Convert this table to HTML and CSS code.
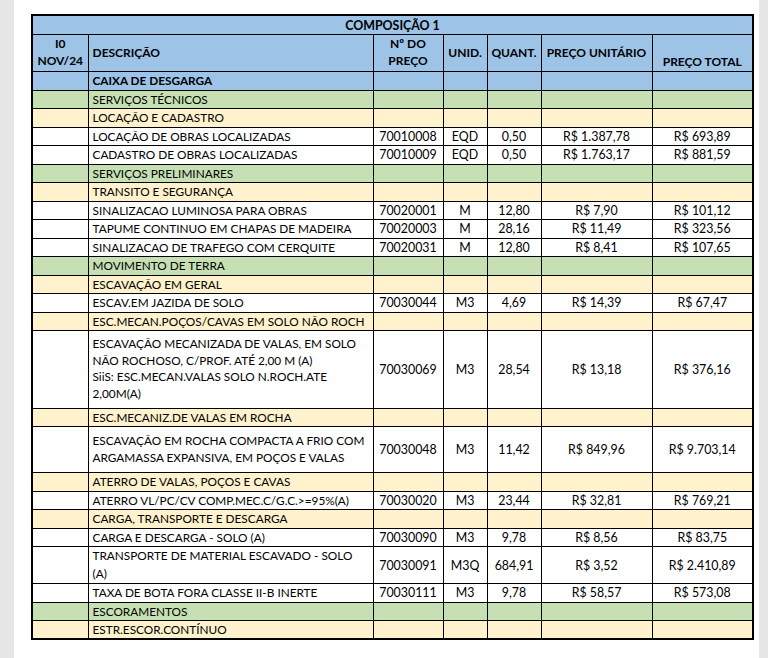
FILE: index.html
```html
<!DOCTYPE html>
<html lang="pt-BR">
<head>
<meta charset="utf-8">
<title>Composição 1</title>
<link rel="stylesheet" href="styles.css">
</head>
<body>
<div class="page">
  <table class="sheet">
    <colgroup>
      <col class="c-id"><col class="c-desc"><col class="c-code"><col class="c-unit"><col class="c-qty"><col class="c-unitp"><col class="c-total">
    </colgroup>
    <thead>
      <tr class="r-title blue"><th colspan="7">COMPOSIÇÃO 1</th></tr>
      <tr class="r-head blue">
        <th>I0<br>NOV/24</th>
        <th class="left">DESCRIÇÃO</th>
        <th>Nº DO<br>PREÇO</th>
        <th>UNID.</th>
        <th>QUANT.</th>
        <th>PREÇO UNITÁRIO</th>
        <th class="bottom">PREÇO TOTAL</th>
      </tr>
    </thead>
    <tbody>
      <tr class="blue"><td></td><td class="desc bold">CAIXA DE DESGARGA</td><td></td><td></td><td></td><td></td><td></td></tr>
      <tr class="green"><td></td><td class="desc">SERVIÇOS TÉCNICOS</td><td></td><td></td><td></td><td></td><td></td></tr>
      <tr class="beige"><td></td><td class="desc">LOCAÇÃO E CADASTRO</td><td></td><td></td><td></td><td></td><td></td></tr>
      <tr><td></td><td class="desc">LOCAÇÃO DE OBRAS LOCALIZADAS</td><td>70010008</td><td>EQD</td><td>0,50</td><td>R$ 1.387,78</td><td>R$ 693,89</td></tr>
      <tr><td></td><td class="desc">CADASTRO DE OBRAS LOCALIZADAS</td><td>70010009</td><td>EQD</td><td>0,50</td><td>R$ 1.763,17</td><td>R$ 881,59</td></tr>
      <tr class="green"><td></td><td class="desc">SERVIÇOS PRELIMINARES</td><td></td><td></td><td></td><td></td><td></td></tr>
      <tr class="beige"><td></td><td class="desc">TRANSITO E SEGURANÇA</td><td></td><td></td><td></td><td></td><td></td></tr>
      <tr><td></td><td class="desc">SINALIZACAO LUMINOSA PARA OBRAS</td><td>70020001</td><td>M</td><td>12,80</td><td>R$ 7,90</td><td>R$ 101,12</td></tr>
      <tr><td></td><td class="desc">TAPUME CONTINUO EM CHAPAS DE MADEIRA</td><td>70020003</td><td>M</td><td>28,16</td><td>R$ 11,49</td><td>R$ 323,56</td></tr>
      <tr><td></td><td class="desc">SINALIZACAO DE TRAFEGO COM CERQUITE</td><td>70020031</td><td>M</td><td>12,80</td><td>R$ 8,41</td><td>R$ 107,65</td></tr>
      <tr class="green"><td></td><td class="desc">MOVIMENTO DE TERRA</td><td></td><td></td><td></td><td></td><td></td></tr>
      <tr class="beige"><td></td><td class="desc">ESCAVAÇÃO EM GERAL</td><td></td><td></td><td></td><td></td><td></td></tr>
      <tr><td></td><td class="desc">ESCAV.EM JAZIDA DE SOLO</td><td>70030044</td><td>M3</td><td>4,69</td><td>R$ 14,39</td><td>R$ 67,47</td></tr>
      <tr class="beige"><td></td><td class="desc">ESC.MECAN.POÇOS/CAVAS EM SOLO NÃO ROCH</td><td></td><td></td><td></td><td></td><td></td></tr>
      <tr class="r-four"><td></td><td class="desc wrap">ESCAVAÇÃO MECANIZADA DE VALAS, EM SOLO<br>NÃO ROCHOSO, C/PROF. ATÉ 2,00 M (A)<br>SiiS: ESC.MECAN.VALAS SOLO N.ROCH.ATE<br>2,00M(A)</td><td>70030069</td><td>M3</td><td>28,54</td><td>R$ 13,18</td><td>R$ 376,16</td></tr>
      <tr class="beige"><td></td><td class="desc">ESC.MECANIZ.DE VALAS EM ROCHA</td><td></td><td></td><td></td><td></td><td></td></tr>
      <tr class="r-rock"><td></td><td class="desc wrap">ESCAVAÇÃO EM ROCHA COMPACTA A FRIO COM<br>ARGAMASSA EXPANSIVA, EM POÇOS E VALAS</td><td>70030048</td><td>M3</td><td>11,42</td><td>R$ 849,96</td><td>R$ 9.703,14</td></tr>
      <tr class="beige"><td></td><td class="desc">ATERRO DE VALAS, POÇOS E CAVAS</td><td></td><td></td><td></td><td></td><td></td></tr>
      <tr><td></td><td class="desc">ATERRO VL/PC/CV COMP.MEC.C/G.C.&gt;=95%(A)</td><td>70030020</td><td>M3</td><td>23,44</td><td>R$ 32,81</td><td>R$ 769,21</td></tr>
      <tr class="beige"><td></td><td class="desc">CARGA, TRANSPORTE E DESCARGA</td><td></td><td></td><td></td><td></td><td></td></tr>
      <tr><td></td><td class="desc">CARGA E DESCARGA - SOLO (A)</td><td>70030090</td><td>M3</td><td>9,78</td><td>R$ 8,56</td><td>R$ 83,75</td></tr>
      <tr class="r-two"><td></td><td class="desc wrap2">TRANSPORTE DE MATERIAL ESCAVADO - SOLO<br>(A)</td><td>70030091</td><td>M3Q</td><td>684,91</td><td>R$ 3,52</td><td>R$ 2.410,89</td></tr>
      <tr><td></td><td class="desc">TAXA DE BOTA FORA CLASSE II-B INERTE</td><td>70030111</td><td>M3</td><td>9,78</td><td>R$ 58,57</td><td>R$ 573,08</td></tr>
      <tr class="green"><td></td><td class="desc">ESCORAMENTOS</td><td></td><td></td><td></td><td></td><td></td></tr>
      <tr class="beige"><td></td><td class="desc">ESTR.ESCOR.CONTÍNUO</td><td></td><td></td><td></td><td></td><td></td></tr>
    </tbody>
  </table>
</div>
</body>
</html>
```

FILE: styles.css
```css
html, body {
  margin: 0;
  padding: 0;
}

body {
  background: #e6e6e6;
  font-family: Lato, "Liberation Sans", sans-serif;
  color: #000;
}

.page {
  background: #ffffff;
  margin-left: 14px;
  width: 745px;
  height: 658px;
  padding-top: 14px;
  padding-left: 17px;
  box-sizing: border-box;
}

.sheet {
  border-collapse: collapse;
  table-layout: fixed;
  width: 721px;
  border: 2px solid #000;
  font-size: 12.4px;
}

.c-id { width: 56px; }
.c-desc { width: 285px; }
.c-code { width: 70px; }
.c-unit { width: 44px; }
.c-qty { width: 54px; }
.c-unitp { width: 111px; }
.c-total { width: 101px; }

.sheet th,
.sheet td {
  border: 1px solid #000;
  box-sizing: border-box;
  height: 18.5px;
  padding: 0 2px;
  text-align: center;
  vertical-align: middle;
  white-space: nowrap;
  overflow: hidden;
  line-height: 15px;
  font-weight: 400;
}

.sheet th {
  font-weight: 700;
  font-size: 12px;
}

.r-title th {
  height: 19px;
  padding-top: 1px;
  font-size: 12.4px;
}

.r-head th {
  height: 37.5px;
  line-height: 16.5px;
}

.sheet th.left {
  text-align: left;
  padding-left: 4px;
}

.sheet th.bottom {
  vertical-align: bottom;
  padding-bottom: 1px;
}

.sheet td.desc {
  text-align: left;
  padding-left: 4px;
  font-size: 11.8px;
  text-overflow: clip;
}

.sheet td.bold {
  font-weight: 700;
}

.sheet td.wrap {
  line-height: 16.5px;
}

.sheet td.wrap2 {
  line-height: 18px;
}

.r-four td { height: 77.5px; }
.r-rock td { height: 46px; }
.r-two td { height: 37px; }

.blue th,
.blue td { background: #9dc3e6; }

.green td { background: #c6e0b4; }

.beige td { background: #fff2cc; }
```
